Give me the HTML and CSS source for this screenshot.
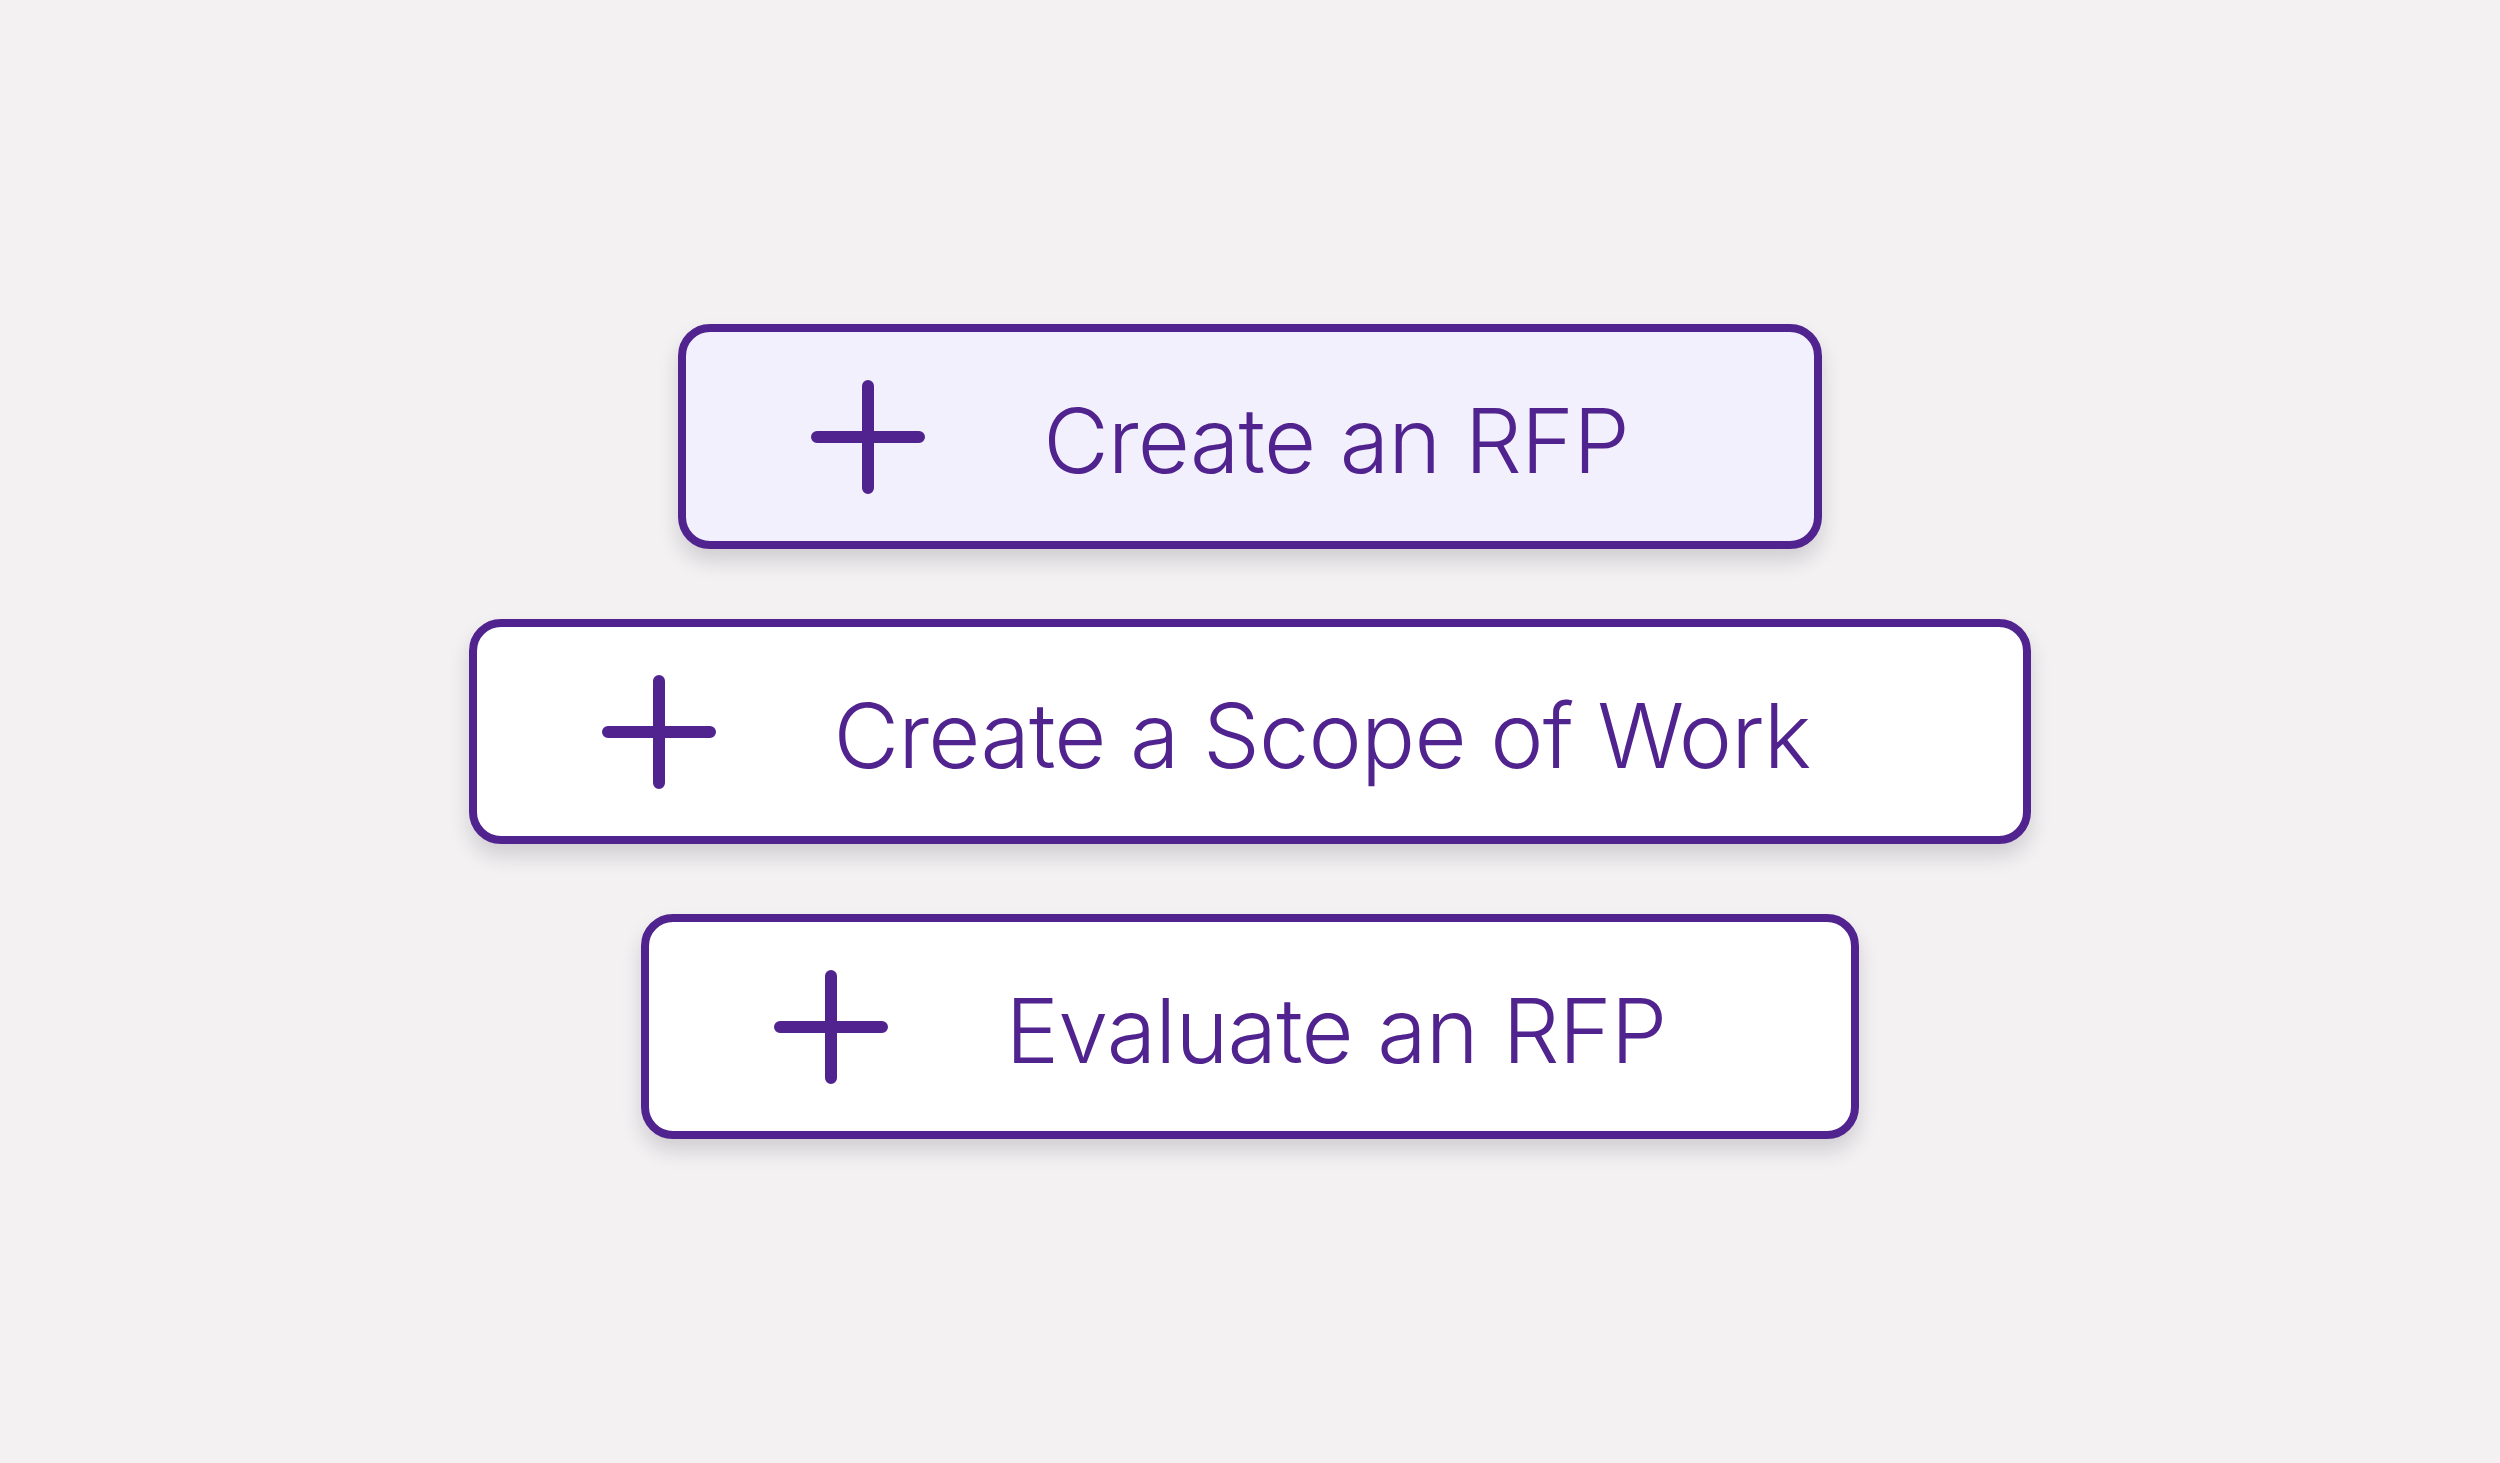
FILE: index.html
```html
<!DOCTYPE html>
<html lang="en">
<head>
<meta charset="utf-8">
<title>Create actions</title>
<link rel="stylesheet" href="styles.css">
</head>
<body>
<main class="actions">
  <button class="action action--active" type="button">
    <svg class="action__icon" viewBox="0 0 114 114" aria-hidden="true"><path d="M57 6V108M6 57H108"/></svg>
    <span class="action__label">Create an RFP</span>
  </button>
  <button class="action action--wide" type="button">
    <svg class="action__icon" viewBox="0 0 114 114" aria-hidden="true"><path d="M57 6V108M6 57H108"/></svg>
    <span class="action__label">Create a Scope of Work</span>
  </button>
  <button class="action" type="button">
    <svg class="action__icon" viewBox="0 0 114 114" aria-hidden="true"><path d="M57 6V108M6 57H108"/></svg>
    <span class="action__label">Evaluate an RFP</span>
  </button>
</main>
</body>
</html>
```
FILE: styles.css
```css
html, body {
  margin: 0;
  padding: 0;
}
body {
  background: #f3f1f2;
  font-family: Inter, "Noto Sans", sans-serif;
}
.actions {
  min-height: 100vh;
  display: flex;
  flex-direction: column;
  align-items: center;
  justify-content: center;
  gap: 70px;
}
.action {
  box-sizing: border-box;
  height: 225px;
  display: flex;
  align-items: center;
  gap: 118px;
  padding: 0 185px 0 125px;
  border: 8px solid #50238f;
  border-radius: 32px;
  background: #ffffff;
  box-shadow: 0 12px 20px rgba(40, 30, 50, 0.16);
  font-family: inherit;
  color: #50238f;
  cursor: pointer;
}
.action--active {
  background: #f3f0fd;
}
.action--wide {
  padding-right: 213px;
}
.action__icon {
  width: 114px;
  height: 114px;
  flex: none;
  fill: none;
  stroke: #50238f;
  stroke-width: 12;
  stroke-linecap: round;
}
.action__label {
  font-size: 90px;
  font-weight: 300;
  line-height: 1;
  letter-spacing: -0.85px;
  white-space: nowrap;
  padding-top: 8px;
}
```
